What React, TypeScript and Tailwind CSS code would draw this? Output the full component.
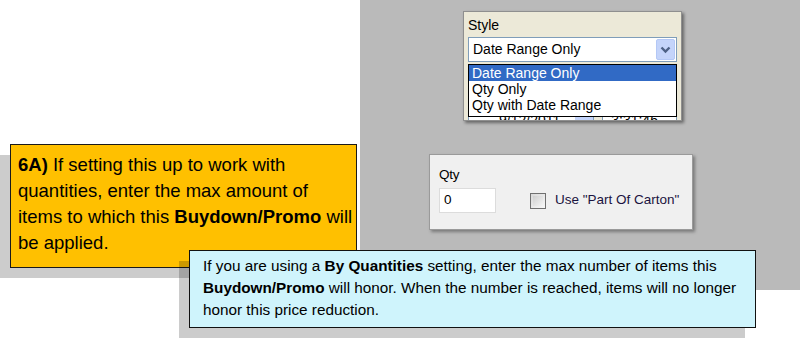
import React from "react";

export default function App() {
  return (
    <div className="relative w-[800px] h-[338px] bg-white overflow-hidden" style={{ fontFamily: '"Liberation Sans", Arial, sans-serif' }}>
      {/* gray screenshot panel */}
      <div className="ml-[360px] w-[440px] h-[290px] bg-[#bababa] pt-[11px]">
        {/* Style window */}
        <div className="relative ml-[103px] w-[219px] h-[110px] bg-[#ece9d8] border border-[#8f8f8f] shadow-[2px_2px_3px_rgba(0,0,0,0.45)] overflow-hidden px-[4px]">
          <div className="pt-[5px] text-[14px] leading-[16px] text-black">Style</div>
          <div className="mt-[4px] w-[209px] h-[25px] bg-white border border-[#7f9db9] flex items-center justify-between pl-[4px] pr-[1px]">
            <span className="text-[14px] text-black">Date Range Only</span>
            <div className="w-[19px] h-[21px] bg-[#c4d4fa] border border-[#b4c8f6] rounded-[2px] flex items-center justify-center">
              <svg width="11" height="8" viewBox="0 0 11 8">
                <path d="M1.5 1.5 L5.5 5.5 L9.5 1.5" stroke="#4d6185" strokeWidth="2.4" fill="none" />
              </svg>
            </div>
          </div>
          {/* partially hidden date row */}
          <div className="mt-[48px] flex gap-[8px]">
            <div className="w-[128px] h-[22px] bg-white border border-[#7f9db9] flex pl-[30px] pt-[1px] text-[14px] leading-[16px] text-black relative">
              9/12/2011
              <div className="absolute right-0 top-0 w-[18px] h-[20px] bg-[#c4d4fa]"></div>
            </div>
            <div className="w-[76px] h-[22px] bg-white border border-[#7f9db9] pl-[8px] pt-[1px] text-[14px] leading-[16px] text-black">3:31:46</div>
          </div>
          {/* dropdown list */}
          <div className="absolute left-[4px] top-[52px] w-[209px] h-[53px] bg-white border border-black text-[14px] leading-[16px] text-black">
            <div className="bg-[#316ac5] text-white pl-[3px] h-[16px]">Date Range Only</div>
            <div className="pl-[3px] h-[16px]">Qty Only</div>
            <div className="pl-[3px] h-[16px]">Qty with Date Range</div>
          </div>
        </div>
        {/* Qty panel */}
        <div className="mt-[33px] ml-[69px] w-[264px] h-[76px] bg-[#f0f0f0] border border-[#9a9a9a] shadow-[2px_2px_3px_rgba(0,0,0,0.35)] pl-[9px] pt-[12px]">
          <div className="text-[13.5px] leading-[16px] text-black tracking-[-0.3px]">Qty</div>
          <div className="mt-[5px] flex items-center">
            <div className="w-[57px] h-[25px] bg-white border border-[#dcdcdc] pl-[4px] flex items-center text-[13.5px] text-black">0</div>
            <div className="ml-[34px] w-[16px] h-[16px] border border-[#707070] bg-[linear-gradient(135deg,#d8d8d8,#f8f8f8)] p-[2px]">
              <div className="w-full h-full bg-[linear-gradient(135deg,#cfcfcf,#f4f4f4)]"></div>
            </div>
            <span className="ml-[9px] text-[13.5px] text-[#1b1340]">Use "Part Of Carton"</span>
          </div>
        </div>
      </div>

      {/* orange callout */}
      <div className="absolute left-0 top-[155px] w-[346px] h-[123px] bg-black/[0.2]"></div>
      <div className="absolute left-[10px] top-[144px] w-[347px] h-[124px] bg-[#ffc000] border-[1.5px] border-[#1a1a1a] px-[7px] pt-[7px] text-[18.5px] leading-[26px] text-black whitespace-nowrap">
        <b>6A)</b> If setting this up to work with<br />
        quantities, enter the max amount of<br />
        items to which this <b>Buydown/Promo</b> will<br />
        be applied.
      </div>

      {/* blue callout */}
      <div className="absolute left-[179px] top-[261px] w-[566px] h-[78px] bg-black/[0.2]"></div>
      <div className="absolute left-[189px] top-[250px] w-[567px] h-[78px] bg-[#cff4fc] border-[1.5px] border-[#111] pl-[13px] pr-[8px] pt-[4px] text-[15.3px] leading-[22px] text-black whitespace-nowrap">
        If you are using a <b>By Quantities</b> setting, enter the max number of items this<br />
        <b>Buydown/Promo</b> will honor. When the number is reached, items will no longer<br />
        honor this price reduction.
      </div>
    </div>
  );
}
